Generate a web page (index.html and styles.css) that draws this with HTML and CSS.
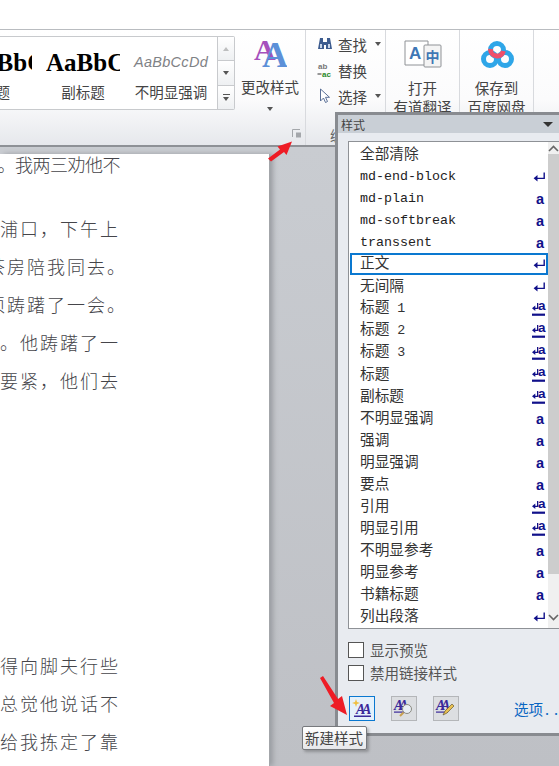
FILE: index.html
```html
<!DOCTYPE html>
<html lang="zh">
<head>
<meta charset="utf-8">
<title>样式</title>
<link rel="stylesheet" href="styles.css">
</head>
<body>
<svg class="defs" width="0" height="0" aria-hidden="true">
  <symbol id="ret" viewBox="0 0 13 11"><path d="M10.500 0.500h1.400v6.600H4.500v2.400L0.600 6.300l3.900-3.200v2.600h6z" fill="#10108a"/></symbol>
  <symbol id="lnk" viewBox="0 0 13 13"><path d="M5 0h1.300v6H3.300v2L0 5.300 3.300 2.600v2.100H5z" fill="#10108a"/><rect x="0" y="10.600" width="13" height="2.200" fill="#10108a"/></symbol>
</svg>

<div class="topbar"></div>

<div class="ribbon">
  <div class="gallery">
    <div class="swatches">
      <div class="swatch s-first"><span class="sample bold">AaBbC</span><span class="caption">标题</span></div>
      <div class="swatch s-second"><span class="sample bold">AaBbC</span><span class="caption">副标题</span></div>
      <div class="swatch s-third"><span class="sample ital">AaBbCcDd</span><span class="caption">不明显强调</span></div>
    </div>
    <div class="spin">
      <div class="spin-btn"><i class="tri up dim"></i></div>
      <div class="spin-btn"><i class="tri"></i></div>
      <div class="spin-btn"><i class="bar"></i><i class="tri"></i></div>
    </div>
  </div>

  <div class="group change">
    <svg class="change-icon" width="34" height="30" viewBox="0 0 34 30">
      <text x="1" y="21" class="aa aa1">A</text>
      <text x="9" y="28" class="aa aa2">A</text>
    </svg>
    <span class="label">更改样式</span>
    <i class="tri"></i>
    <svg class="launcher" width="10" height="9" viewBox="0 0 10 9"><path d="M0.500 8V0.500H8" fill="none" stroke="#a4a7ab"/><rect x="4" y="3.500" width="5" height="5" fill="#a4a7ab"/></svg>
  </div>

  <div class="group edit">
    <div class="edit-row">
      <svg width="16" height="14" viewBox="0 0 16 14"><path d="M3 1h3v4h4V1h3l2 11H9V8H7v4H1z" fill="#3d5c8f"/><path d="M3 7h2v4H3zM11 7h2v4h-2z" fill="#c9d6ea"/></svg>
      <span class="label">查找</span><i class="tri"></i>
    </div>
    <div class="edit-row">
      <svg width="16" height="16" viewBox="0 0 16 16"><text x="1" y="7" class="abc grey">ab</text><text x="5" y="15" class="abc green">ac</text><path d="M0.500 12h4" stroke="#333"/></svg>
      <span class="label">替换</span>
    </div>
    <div class="edit-row">
      <svg width="16" height="16" viewBox="0 0 16 16"><path d="M3.500 1v12l3-3 2 4.500 2-1-2-4.200h4z" fill="#fff" stroke="#5a6f96"/></svg>
      <span class="label">选择</span><i class="tri"></i>
    </div>
    <span class="group-name">编辑</span>
  </div>

  <div class="group tool tool-a">
    <svg width="40" height="32" viewBox="0 0 40 32">
      <path d="M2 2h23v24H2z" fill="#fff" stroke="#8f9296"/>
      <rect x="21" y="6" width="17" height="22" rx="1" fill="#f4f4f4" stroke="#8f9296"/>
      <text x="6" y="20" class="yd-a">A</text>
      <text x="22.500" y="23" class="yd-z">中</text>
    </svg>
    <span class="label">打开</span>
    <span class="label">有道翻译</span>
  </div>

  <div class="group tool tool-b">
    <svg width="40" height="32" viewBox="-3 -2 40 32">
      <circle cx="10" cy="18" r="6.500" fill="none" stroke="#2fa6e8" stroke-width="5"/>
      <circle cx="25" cy="18" r="6.500" fill="none" stroke="#2fa6e8" stroke-width="5"/>
      <circle cx="17" cy="9" r="6.500" fill="none" stroke="#2fa6e8" stroke-width="5"/>
      <path d="M10.600 8A6.500 6.500 0 0 0 23.400 10" fill="none" stroke="#ef4f6b" stroke-width="5"/>
    </svg>
    <span class="label">保存到</span>
    <span class="label">百度网盘</span>
  </div>
  <div class="group tool-end"></div>
</div>

<div class="workspace">
  <div class="doc">
    <p class="line tight">。我两三劝他不</p>
    <p class="line gap">浦口，下午上</p>
    <p class="line stop">茶房陪我同去。</p>
    <p class="line stop">须踌躇了一会。</p>
    <p class="line">。他踌躇了一</p>
    <p class="line">要紧，他们去</p>
    <p class="line far">得向脚夫行些</p>
    <p class="line">总觉他说话不</p>
    <p class="line">给我拣定了靠</p>
  </div>
</div>

<section class="pane">
  <header class="pane-title"><span>样式</span><i class="pane-caret"></i></header>
  <div class="list">
    <ul class="rows">
      <li class="row"><span class="cjk">全部清除</span></li>
      <li class="row"><span>md-end-block</span><svg class="m-ret"><use href="#ret"/></svg></li>
      <li class="row"><span>md-plain</span><b class="m-a">a</b></li>
      <li class="row"><span>md-softbreak</span><b class="m-a">a</b></li>
      <li class="row"><span>transsent</span><b class="m-a">a</b></li>
      <li class="row sel"><span class="cjk">正文</span><svg class="m-ret"><use href="#ret"/></svg></li>
      <li class="row"><span class="cjk">无间隔</span><svg class="m-ret"><use href="#ret"/></svg></li>
      <li class="row"><span class="cjk">标题<span class="mono"> 1</span></span><span class="m-lnk"><svg><use href="#lnk"/></svg><b>a</b></span></li>
      <li class="row"><span class="cjk">标题<span class="mono"> 2</span></span><span class="m-lnk"><svg><use href="#lnk"/></svg><b>a</b></span></li>
      <li class="row"><span class="cjk">标题<span class="mono"> 3</span></span><span class="m-lnk"><svg><use href="#lnk"/></svg><b>a</b></span></li>
      <li class="row"><span class="cjk">标题</span><span class="m-lnk"><svg><use href="#lnk"/></svg><b>a</b></span></li>
      <li class="row"><span class="cjk">副标题</span><span class="m-lnk"><svg><use href="#lnk"/></svg><b>a</b></span></li>
      <li class="row"><span class="cjk">不明显强调</span><b class="m-a">a</b></li>
      <li class="row"><span class="cjk">强调</span><b class="m-a">a</b></li>
      <li class="row"><span class="cjk">明显强调</span><b class="m-a">a</b></li>
      <li class="row"><span class="cjk">要点</span><b class="m-a">a</b></li>
      <li class="row"><span class="cjk">引用</span><span class="m-lnk"><svg><use href="#lnk"/></svg><b>a</b></span></li>
      <li class="row"><span class="cjk">明显引用</span><span class="m-lnk"><svg><use href="#lnk"/></svg><b>a</b></span></li>
      <li class="row"><span class="cjk">不明显参考</span><b class="m-a">a</b></li>
      <li class="row"><span class="cjk">明显参考</span><b class="m-a">a</b></li>
      <li class="row"><span class="cjk">书籍标题</span><b class="m-a">a</b></li>
      <li class="row"><span class="cjk">列出段落</span><svg class="m-ret"><use href="#ret"/></svg></li>
    </ul>
    <div class="scroll">
      <div class="scroll-btn"><svg width="11" height="7" viewBox="0 0 11 7"><path d="M1 6l4.500-4.500L10 6" fill="none" stroke="#666" stroke-width="1.600"/></svg></div>
      <div class="thumb"></div>
      <div class="scroll-track"><svg width="11" height="7" viewBox="0 0 11 7"><path d="M1 1l4.500 4.500L10 1" fill="none" stroke="#666" stroke-width="1.600"/></svg></div>
    </div>
  </div>

  <label class="check"><i class="box"></i>显示预览</label>
  <label class="check"><i class="box"></i>禁用链接样式</label>

  <div class="actions">
    <button class="act act-on" type="button">
      <svg width="22" height="20" viewBox="0 0 22 20"><path d="M5 1l1 3 3 1-3 1-1 3-1-3-3-1 3-1z" fill="#f0c040"/><text x="5" y="16" class="ic-a">A</text><text x="11" y="16" class="ic-a">A</text><rect x="3" y="17.500" width="17" height="1.500" fill="#3a2a9a"/></svg>
    </button>
    <button class="act" type="button">
      <svg width="22" height="20" viewBox="0 0 22 20"><text x="1" y="12" class="ic-a">A</text><text x="6" y="12" class="ic-a">A</text><rect x="1" y="13.500" width="12" height="1.200" fill="#3a2a9a"/><circle cx="14" cy="11" r="4.500" fill="#e8eef5" stroke="#8a8a80"/><path d="M10.500 14.500L7 18" stroke="#c9a050" stroke-width="2"/></svg>
    </button>
    <button class="act" type="button">
      <svg width="22" height="20" viewBox="0 0 22 20"><text x="1" y="12" class="ic-a">A</text><text x="6" y="12" class="ic-a">A</text><rect x="1" y="13.500" width="12" height="1.200" fill="#3a2a9a"/><path d="M8 17l2-4 7-7 2 2-7 7z" fill="#e8c050" stroke="#6a5a30" stroke-width=".7"/></svg>
    </button>
    <a class="options">选项<span class="dots">...</span></a>
  </div>
</section>

<div class="tooltip">新建样式</div>

<svg class="arrow arrow-a" width="26" height="22" viewBox="0 0 26 22"><path d="M0 18.500L12 9.500l-2.500-3L24 1.500 18.500 15 16 12 3 21.500z" fill="#ee1c25"/></svg>
<svg class="arrow arrow-b" width="30" height="42" viewBox="0 0 30 42"><path d="M3 0l15 23 4-3 5 19-17-9 4-3L0 2z" fill="#ee1c25"/></svg>
</body>
</html>
```

FILE: styles.css
```css
* { box-sizing: border-box; }
html, body { margin: 0; padding: 0; }
body {
  width: 559px;
  height: 766px;
  overflow: hidden;
  position: relative;
  background: #c9ccd1;
  font-family: "Noto Sans CJK SC", "Liberation Sans", sans-serif;
  color: #444;
}
.defs { position: absolute; }
i { display: block; font-style: normal; }

.topbar { height: 30px; background: #fff; border-bottom: 1px solid #b9bcc0; }

.ribbon {
  height: 117px;
  display: flex;
  overflow: hidden;
  background: linear-gradient(#fff 0, #fbfbfc 60%, #e6e8ec 100%);
  border-bottom: 2px solid #8e9196;
}
.label { font-size: 14.500px; line-height: 19px; color: #444; white-space: nowrap; }

.gallery {
  width: 235px;
  height: 74px;
  margin-top: 6px;
  flex: none;
  display: flex;
  background: #fff;
  border: 1px solid #c8cacd;
  border-left: 0;
  border-radius: 0 2px 2px 0;
}
.swatches { width: 217px; flex: none; display: flex; justify-content: flex-end; overflow: hidden; }
.swatch { display: flex; flex-direction: column; align-items: center; flex: none; overflow: hidden; }
.s-first { width: 66px; margin-right: 14px; align-items: flex-start; }
.s-first .caption { margin-left: 15px; }
.s-second { width: 74px; margin-right: 13px; }
.s-second .sample { align-self: flex-start; }
.s-third { width: 76px; margin-right: 8px; }
.sample { height: 41px; white-space: nowrap; color: #000; }
.bold { font: bold 25px/51px "Liberation Serif", serif; }
.ital { font: italic 14.500px/50px "Liberation Sans", sans-serif; color: #7f8286; letter-spacing: .3px; }
.caption { font-size: 14.500px; line-height: 20px; margin-top: 4px; color: #444; white-space: nowrap; }
.spin { flex: 1; display: flex; flex-direction: column; border-left: 1px solid #c8cacd; }
.spin-btn {
  flex: 1;
  display: flex;
  flex-direction: column;
  align-items: center;
  justify-content: center;
  gap: 2px;
  background: linear-gradient(#fff, #eef0f2);
  border-bottom: 1px solid #c8cacd;
}
.spin-btn:last-child { border-bottom: 0; }

.tri { width: 0; height: 0; border: 3.500px solid transparent; border-top: 4px solid #555; border-bottom: 0; }
.tri.up { border-top: 0; border-bottom: 4px solid #555; }
.tri.dim { opacity: .35; }
.bar { width: 7px; height: 1px; background: #555; }

.group { flex: none; height: 115px; border-right: 1px solid #d8dade; }
.change {
  width: 71px;
  position: relative;
  display: flex;
  flex-direction: column;
  align-items: center;
  padding-top: 9px;
}
.change-icon { margin-bottom: 8px; }
.change .label { margin-bottom: 11px; }
.aa { font-family: "Liberation Serif", serif; font-weight: bold; }
.aa1 { fill: #a650bc; font-size: 30px; }
.aa2 { fill: #5c90d8; font-size: 36px; }
.launcher { position: absolute; left: 57px; top: 99px; }

.edit { width: 80px; padding: 1px 0 0 11px; position: relative; }
.edit-row { height: 26px; display: flex; align-items: center; gap: 5px; }
.edit-row .tri { margin-left: 3px; }
.group-name { position: absolute; left: 24px; top: 95px; font-size: 14px; color: #666; }
.abc { font: bold 8px "Liberation Sans", sans-serif; }
.grey { fill: #777; }
.green { fill: #2a8a2a; }

.tool { display: flex; flex-direction: column; align-items: center; padding-top: 9px; }
.tool svg { margin-bottom: 7px; }
.tool-a { width: 74px; }
.tool-b { width: 74px; }
.yd-a { font: bold 17px "Liberation Sans", sans-serif; fill: #3f77b5; }
.yd-z { font: bold 14px "Noto Sans CJK SC", sans-serif; fill: #3f77b5; }
.tool-end { width: 30px; border-right: 0; }

.workspace {
  height: 619px;
  padding-top: 7px;
  background: linear-gradient(#c9ccd1, #bec0c5);
}
.doc {
  width: 269px;
  height: 612px;
  padding: 0 149px 0 0;
  background: #fff;
  box-shadow: 1px 0 0 #a3a6aa, 4px 0 5px #9a9da2;
}
.line {
  margin: 0;
  height: 38px;
  line-height: 20px;
  display: flex;
  justify-content: flex-end;
  white-space: nowrap;
  font-size: 18px;
  font-weight: 300;
  letter-spacing: 2px;
  color: #45454a;
}
.line.tight { letter-spacing: -.5px; }
.line.stop { margin-right: -7px; }
.line.gap { margin-top: 26px; }
.line.far { margin-top: 247px; }

.pane {
  position: absolute;
  left: 335px;
  top: 112px;
  width: 240px;
  height: 624px;
  background: #e8ebf0;
  border: 3px solid #888b90;
  padding: 0;
}
.pane-title {
  height: 18px;
  margin: 0;
  padding: 0 16px 0 3px;
  display: flex;
  align-items: center;
  justify-content: space-between;
  background: #c9cfd6;
  font-size: 12px;
  color: #444;
}
.pane-caret { width: 0; height: 0; border: 5px solid transparent; border-top: 5px solid #333; border-bottom: 0; margin-right: 3px; }

.list {
  margin: 8px 0 0 10px;
  width: 240px;
  height: 488px;
  border: 1px solid #8e9196;
  border-right: 0;
  background: #fff;
  display: flex;
}
.rows {
  list-style: none;
  margin: 2px 0 0;
  padding: 0;
  width: 199px;
  flex: none;
}
.row {
  height: 22px;
  padding: 0 3px 0 11px;
  display: flex;
  align-items: center;
  justify-content: space-between;
  font: 13.330px/22px "Liberation Mono", monospace;
  color: #222;
  white-space: pre;
}
.cjk { font: 14.670px/22px "Noto Sans CJK SC", sans-serif; color: #333; margin-bottom: 4px; }
.mono { font: 13.330px/22px "Liberation Mono", monospace; }
.sel { border: 2px solid #0a78d0; margin: -1px 0 1px 1px; padding-left: 8px; padding-right: 1px; }
.m-ret { width: 13px; height: 11px; flex: none; margin-right: -1px; }
.m-a { font: bold 14.500px/22px "Liberation Sans", sans-serif; color: #10108a; margin-right: 1px; }
.m-lnk { display: block; height: 13px; position: relative; width: 13px; margin-right: 0; }
.m-lnk svg { width: 13px; height: 13px; position: absolute; left: 0; top: 0; }
.m-lnk b { position: absolute; left: 6px; top: -6px; font: bold 13.500px/18px "Liberation Sans", sans-serif; color: #10108a; }
.scroll { width: 11px; flex: none; display: flex; flex-direction: column; background: #f0f0f0; }
.scroll-btn { height: 12px; display: flex; align-items: center; justify-content: center; flex: none; }
.thumb { height: 420px; flex: none; background: #cdcdcd; }
.scroll-track { flex: 1; display: flex; align-items: flex-end; justify-content: center; padding-bottom: 7px; }

.check {
  display: flex;
  align-items: center;
  gap: 6px;
  height: 23px;
  margin-left: 10px;
  font-size: 14.500px;
  color: #555;
}
.list + .check { margin-top: 9px; }
.box { width: 16px; height: 16px; background: #fff; border: 1px solid #555; }

.actions { margin: 11px 0 0 11px; display: flex; align-items: center; gap: 16px; height: 26px; width: 300px; }
.act {
  width: 26px;
  height: 25px;
  flex: none;
  padding: 0;
  display: flex;
  align-items: center;
  justify-content: center;
  background: #dcdee1;
  border: 1px solid #b4b6b9;
}
.act-on { background: #e5f1fb; border-color: #0a78d0; }
.ic-a { font: italic bold 14px "Liberation Serif", serif; fill: #3a2a9a; }
.options { margin-left: 39px; font-size: 14.500px; color: #0a66c2; white-space: nowrap; }
.dots { letter-spacing: 5px; margin-left: 2px; }

.tooltip {
  position: absolute;
  left: 302px;
  top: 726px;
  width: 65px;
  height: 24px;
  padding-left: 2px;
  background: linear-gradient(#fff, #e6e7ea);
  border: 1px solid #77797d;
  border-radius: 2px;
  box-shadow: 2px 2px 3px rgba(0,0,0,.25);
  font-size: 14.500px;
  line-height: 22px;
  color: #444;
  white-space: nowrap;
}

.arrow { position: absolute; }
.arrow-a { left: 268px; top: 140px; }
.arrow-b { left: 320px; top: 676px; }
```
